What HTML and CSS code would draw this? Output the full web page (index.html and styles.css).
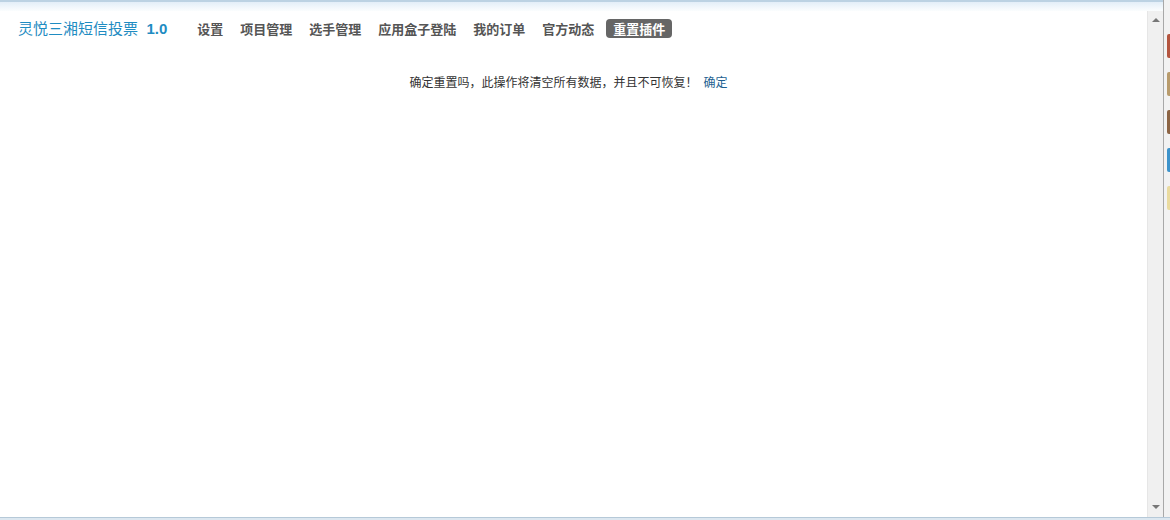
FILE: index.html
```html
<!DOCTYPE html>
<html lang="zh-CN">

<head>
    <meta charset="UTF-8">
    <title>灵悦三湘短信投票</title>
    <link rel="stylesheet" href="styles.css">
</head>

<body>

    <div class="window">
        <div class="main-col">
            <div class="top-edge"></div>
            <div class="content-row">
                <div class="page">
                    <div class="header">
                        <h1 class="title">灵悦三湘短信投票 <span class="version">1.0</span></h1>
                        <ul class="nav">
                            <li><a href="#">设置</a></li>
                            <li><a href="#">项目管理</a></li>
                            <li><a href="#">选手管理</a></li>
                            <li><a href="#">应用盒子登陆</a></li>
                            <li><a href="#">我的订单</a></li>
                            <li><a href="#">官方动态</a></li>
                            <li><a href="#" class="current">重置插件</a></li>
                        </ul>
                    </div>

                    <p class="confirm">确定重置吗，此操作将清空所有数据，并且不可恢复！<a href="#">确定</a></p>
                </div>

                <div class="scrollbar">
                    <span class="arrow up"></span>
                    <span class="arrow down"></span>
                </div>
            </div>
        </div>

        <div class="side-strip">
            <span class="tab red"></span>
            <span class="tab tan"></span>
            <span class="tab brown"></span>
            <span class="tab blue"></span>
            <span class="tab yellow"></span>
        </div>
    </div>
    <div class="bottom-edge"></div>

</body>

</html>
```

FILE: styles.css
```css
/* Basic Reset */
* {
    margin: 0;
    padding: 0;
    box-sizing: border-box;
}

body {
    width: 1170px;
    height: 520px;
    overflow: hidden;
    background-color: #dce7f0;
    font-family: "Noto Sans CJK SC", "Liberation Sans", sans-serif;
}

.window {
    display: flex;
    height: 517px;
}

.main-col {
    flex: 1;
    display: flex;
    flex-direction: column;
}

/* light blue frame edge at the top */
.top-edge {
    height: 11px;
    border-top: 2px solid #bcd2e3;
    background: linear-gradient(#e3eef8, #fbfdfe);
}

.content-row {
    flex: 1;
    display: flex;
}

.page {
    flex: 1;
    background-color: #fff;
}

.header {
    display: flex;
    align-items: center;
    padding: 7px 0 0 18px;
}

.title {
    font-size: 15px;
    font-weight: normal;
    color: #1f8cc2;
    line-height: 20px;
}

.version {
    font-family: "Liberation Sans", sans-serif;
    font-weight: bold;
    margin-left: 5px;
}

.nav {
    list-style: none;
    display: flex;
    gap: 3px;
    margin-left: 23px;
}

.nav a {
    display: block;
    padding: 0 7px;
    font-size: 13px;
    font-weight: bold;
    line-height: 19px;
    color: #555;
    text-decoration: none;
    border-radius: 4px;
}

.nav a.current {
    background-color: #666;
    color: #fff;
    margin-left: 2px;
}

.confirm {
    margin-top: 34px;
    text-align: center;
    font-size: 12px;
    line-height: 18px;
    color: #333;
    padding-right: 10px;
}

.confirm a {
    margin-left: 6px;
    color: #1d5f91;
    text-decoration: none;
}

/* fake browser scrollbar */
.scrollbar {
    width: 16px;
    background-color: #f0f0f0;
    border-left: 1px solid #e6e6e6;
    display: flex;
    flex-direction: column;
    justify-content: space-between;
    align-items: center;
    padding: 7px 0 8px;
}

.arrow {
    width: 0;
    height: 0;
    border-left: 4px solid transparent;
    border-right: 4px solid transparent;
}

.arrow.up {
    border-bottom: 4px solid #777;
}

.arrow.down {
    border-top: 4px solid #777;
}

.side-strip {
    width: 7px;
    border-left: 1px solid #a8a8a8;
    background-color: #f2f2f2;
    display: flex;
    flex-direction: column;
    align-items: flex-end;
    gap: 14px;
    padding-top: 34px;
}

.tab {
    width: 3px;
    height: 24px;
    border-radius: 2px 0 0 2px;
}

.red { background-color: #b4553f; }
.tan { background-color: #b89b6c; }
.brown { background-color: #8c6444; }
.blue { background-color: #3d93cb; }
.yellow { background-color: #eadb9f; }

.bottom-edge {
    height: 3px;
    border-top: 1px solid #b6c9d8;
    background-color: #dce7f0;
}
```
